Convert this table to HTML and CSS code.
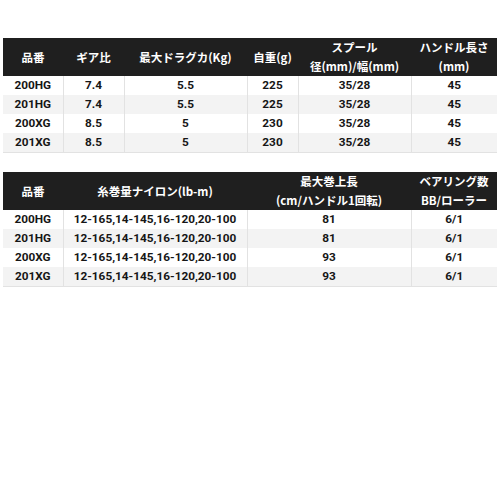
FILE: index.html
```html
<!DOCTYPE html>
<html lang="ja">
<head>
<meta charset="utf-8">
<link rel="stylesheet" href="styles.css">
</head>
<body>
<div class="page">
  <table class="spec spec1">
    <colgroup>
      <col class="c60"><col class="c61"><col class="c123"><col class="c51"><col class="c113"><col class="c86">
    </colgroup>
    <thead>
      <tr>
        <th>品番</th>
        <th>ギア比</th>
        <th>最大ドラグカ(Kg)</th>
        <th>自重(g)</th>
        <th>スプール<br>径(mm)/幅(mm)</th>
        <th>ハンドル長さ<br>(mm)</th>
      </tr>
    </thead>
    <tbody>
      <tr><td>200HG</td><td>7.4</td><td>5.5</td><td>225</td><td>35/28</td><td>45</td></tr>
      <tr><td>201HG</td><td>7.4</td><td>5.5</td><td>225</td><td>35/28</td><td>45</td></tr>
      <tr><td>200XG</td><td>8.5</td><td>5</td><td>230</td><td>35/28</td><td>45</td></tr>
      <tr><td>201XG</td><td>8.5</td><td>5</td><td>230</td><td>35/28</td><td>45</td></tr>
    </tbody>
  </table>
  <table class="spec spec2">
    <colgroup>
      <col class="c60"><col class="c184"><col class="c164"><col class="c86">
    </colgroup>
    <thead>
      <tr>
        <th>品番</th>
        <th>糸巻量ナイロン(lb-m)</th>
        <th>最大巻上長<br>(cm/ハンドル1回転)</th>
        <th>ベアリング数<br>BB/ローラー</th>
      </tr>
    </thead>
    <tbody>
      <tr><td>200HG</td><td>12-165,14-145,16-120,20-100</td><td>81</td><td>6/1</td></tr>
      <tr><td>201HG</td><td>12-165,14-145,16-120,20-100</td><td>81</td><td>6/1</td></tr>
      <tr><td>200XG</td><td>12-165,14-145,16-120,20-100</td><td>93</td><td>6/1</td></tr>
      <tr><td>201XG</td><td>12-165,14-145,16-120,20-100</td><td>93</td><td>6/1</td></tr>
    </tbody>
  </table>
</div>
</body>
</html>
```
FILE: styles.css
```css
html, body {
  margin: 0;
  padding: 0;
  background: #ffffff;
}
.page {
  padding: 38px 3px 0 3px;
  display: flex;
  flex-direction: column;
  gap: 19px;
  font-family: Roboto, "Noto Sans CJK JP", sans-serif;
}
.spec {
  width: 494px;
  border-collapse: collapse;
  table-layout: fixed;
}
.c60 { width: 60px; }
.c61 { width: 61px; }
.c123 { width: 123px; }
.c51 { width: 51px; }
.c113 { width: 113px; }
.c86 { width: 86px; }
.c184 { width: 184px; }
.c164 { width: 164px; }
.spec th {
  background: #1f1f1f;
  color: #ffffff;
  font-family: "Noto Sans CJK JP", sans-serif;
  font-size: 11.5px;
  font-weight: 700;
  line-height: 19px;
  height: 36px;
  padding: 0;
  text-align: center;
  vertical-align: middle;
  white-space: nowrap;
}
.spec2 th { height: 37px; }
.spec td {
  font-family: Roboto, sans-serif;
  font-size: 11.8px;
  font-weight: 700;
  color: #161616;
  height: 19px;
  line-height: 19px;
  padding: 0;
  text-align: center;
  white-space: nowrap;
  border-left: 1px solid #e2e2e2;
  border-right: 1px solid #e2e2e2;
}
.spec td:first-child { border-left: none; }
.spec td:last-child { border-right: none; }
.spec tbody tr:nth-child(even) td { background: #f3f3f3; }
.spec tbody tr:last-child td { border-bottom: 1px solid #e2e2e2; }
```
